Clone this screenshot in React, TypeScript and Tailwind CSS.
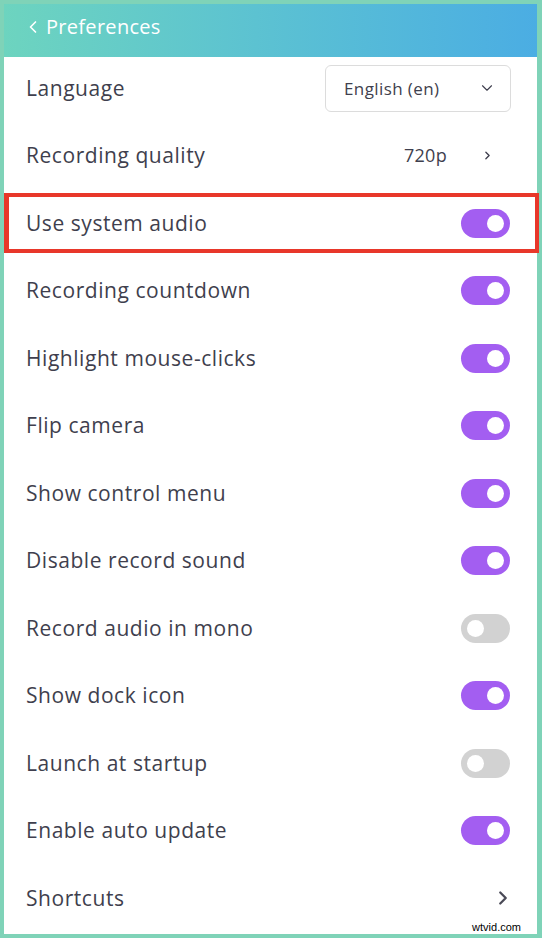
import { ChevronDown, ChevronLeft, ChevronRight } from "lucide-react"

type Row =
  | { label: string; kind: "toggle"; on: boolean; highlight?: boolean }
  | { label: string; kind: "select"; value: string }
  | { label: string; kind: "link"; value?: string; big?: boolean }

const rows: Row[] = [
  { label: "Language", kind: "select", value: "English (en)" },
  { label: "Recording quality", kind: "link", value: "720p" },
  { label: "Use system audio", kind: "toggle", on: true, highlight: true },
  { label: "Recording countdown", kind: "toggle", on: true },
  { label: "Highlight mouse-clicks", kind: "toggle", on: true },
  { label: "Flip camera", kind: "toggle", on: true },
  { label: "Show control menu", kind: "toggle", on: true },
  { label: "Disable record sound", kind: "toggle", on: true },
  { label: "Record audio in mono", kind: "toggle", on: false },
  { label: "Show dock icon", kind: "toggle", on: true },
  { label: "Launch at startup", kind: "toggle", on: false },
  { label: "Enable auto update", kind: "toggle", on: true },
  { label: "Shortcuts", kind: "link", big: true },
]

function Toggle({ on }: { on: boolean }) {
  return (
    <div
      className={
        "flex items-center w-[49px] h-[29px] rounded-full px-[6px] " +
        (on ? "bg-[#a35ef1] justify-end" : "bg-[#d2d2d2] justify-start")
      }
    >
      <div className="w-[17px] h-[17px] rounded-full bg-white" />
    </div>
  )
}

export default function App() {
  return (
    <div
      className="w-[542px] h-[938px] bg-[#7fd3b8] p-[4px] pr-[5px]"
      style={{ fontFamily: "'Open Sans', 'Noto Sans', sans-serif" }}
    >
      <div className="relative h-full bg-white flex flex-col">
        <div className="h-[53px] shrink-0 flex items-center pl-[19px] pb-[7px] gap-[3px] bg-gradient-to-r from-[#6dd4bf] to-[#4badE3] text-white">
          <ChevronLeft size={20} strokeWidth={2} />
          <span className="text-[20px] tracking-[0.3px]">Preferences</span>
        </div>
        {rows.map((row, i) => (
          <div
            key={i}
            className="relative h-[67.5px] shrink-0 flex items-center justify-between pl-[22px] pr-[27px] pb-[5px] text-[#3f3f4e]"
          >
            <span className="text-[21px] tracking-[0.55px]">{row.label}</span>
            {row.kind === "toggle" && <Toggle on={row.on} />}
            {row.kind === "toggle" && row.highlight && (
              <div className="absolute top-[1px] bottom-[7px] left-0 -right-[2px] border-[4px] border-l-[5px] border-[#e8372a]" />
            )}
            {row.kind === "select" && (
              <div className="w-[186px] h-[47px] -mr-[1px] rounded-[6px] border border-[#dcdcdc] flex items-center justify-between pl-[18px] pr-[14px]">
                <span className="text-[17px] tracking-[0.4px]">English (en)</span>
                <ChevronDown size={18} strokeWidth={1.5} />
              </div>
            )}
            {row.kind === "link" && !row.big && (
              <div className="flex items-center gap-[34px] mr-[16px]">
                <span className="text-[18px] tracking-[0.3px]">{row.value}</span>
                <ChevronRight size={13} strokeWidth={2.5} />
              </div>
            )}
            {row.kind === "link" && row.big && (
              <ChevronRight size={22} strokeWidth={2.5} className="-mr-[4px] text-[#4a4a57]" />
            )}
          </div>
        ))}
        <span
          className="absolute right-[16px] -bottom-[1px] text-[11px] text-black"
          style={{ fontFamily: "'Liberation Sans', sans-serif" }}
        >
          wtvid.com
        </span>
      </div>
    </div>
  )
}
